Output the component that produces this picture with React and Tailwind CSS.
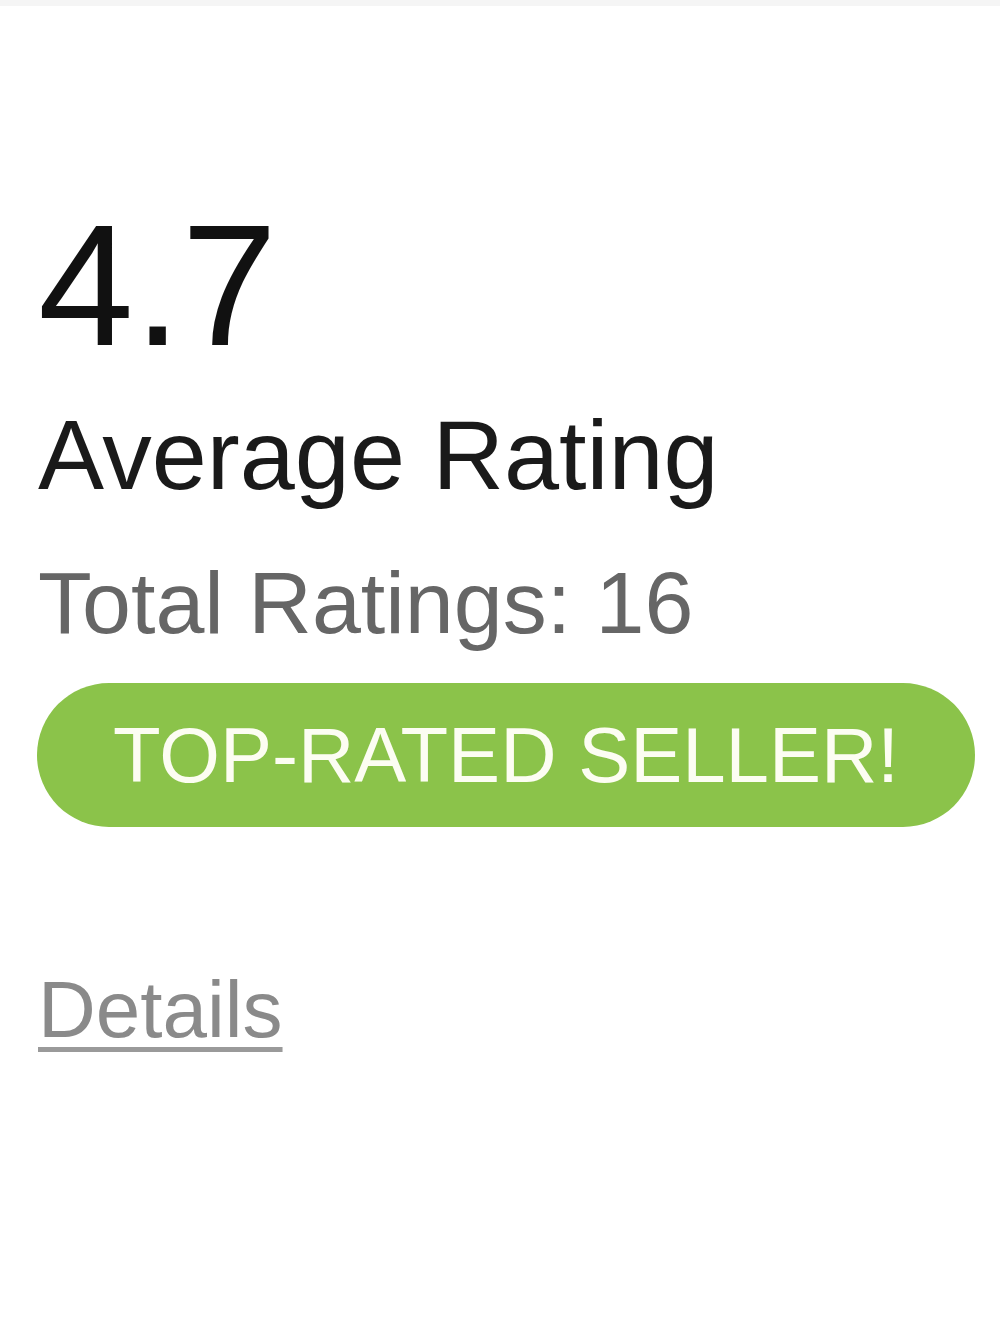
import React from 'react';

// Seller rating summary card
export default function App() {
  const rating = 4.7;
  const total = 16;

  return (
    <div className="min-h-screen bg-white font-['Liberation_Sans',Arial,sans-serif]">
      <div className="h-[6px] bg-[#f5f5f5]" />
      <div className="pl-[38px] pr-[25px]">
        <div className="mt-[193px] text-[172px] leading-none text-[#111111]">{rating}</div>
        <div className="mt-[34px] text-[99px] leading-none text-[#1a1a1a]">Average Rating</div>
        <div className="mt-[55px] text-[88px] leading-none text-[#666666]">Total Ratings: {total}</div>
        <div className="mt-[36px] -ml-px flex h-[144px] items-center justify-center rounded-full bg-[#8bc34a]">
          <span className="text-[78px] leading-none text-[#fcfdf2]">TOP-RATED SELLER!</span>
        </div>
        <div className="mt-[143px]">
          <a
            href="#details"
            className="text-[80px] leading-none text-[#8a8a8a] underline decoration-[#9a9a9a] decoration-[5px] underline-offset-[10px]"
          >
            Details
          </a>
        </div>
      </div>
    </div>
  );
}
